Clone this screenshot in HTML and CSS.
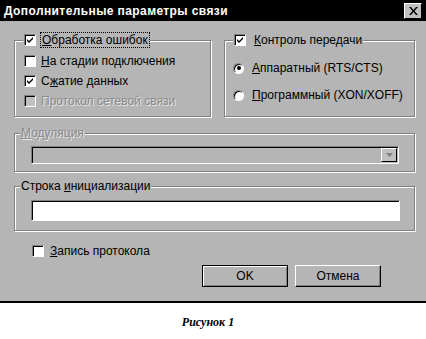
FILE: index.html
```html
<!DOCTYPE html>
<html lang="ru">
<head>
    <meta charset="UTF-8">
    <title>Дополнительные параметры связи</title>
    <link rel="stylesheet" href="styles.css">
</head>
<body>
    <div class="window">
        <div class="titlebar">
            <span class="title">Дополнительные параметры связи</span>
            <span class="close">
                <svg width="9" height="8" viewBox="0 0 9 8"><path d="M0 0h2l2.5 3 2.5-3h2l-3.5 4 3.5 4h-2l-2.5-3-2.5 3h-2l3.5-4z" fill="#000"/></svg>
            </span>
        </div>
        <div class="content">
            <div class="top-row">
                <fieldset class="group group-errors">
                    <legend>
                        <label class="check">
                            <span class="box on"></span>
                            <span class="focus"><u>О</u>бработка ошибок</span>
                        </label>
                    </legend>
                    <div class="rows">
                        <label class="check"><span class="box"></span><span><u>Н</u>а стадии подключения</span></label>
                        <label class="check"><span class="box on"></span><span>С<u>ж</u>атие данных</span></label>
                        <label class="check disabled"><span class="box"></span><span>Протокол сетевой связи</span></label>
                    </div>
                </fieldset>
                <fieldset class="group group-flow">
                    <legend>
                        <label class="check wide">
                            <span class="box on"></span>
                            <span><u>К</u>онтроль передачи</span>
                        </label>
                    </legend>
                    <div class="rows radios">
                        <label class="check wide"><span class="radio on"></span><span><u>А</u>ппаратный (RTS/CTS)</span></label>
                        <label class="check wide"><span class="radio"></span><span><u>П</u>рограммный (XON/XOFF)</span></label>
                    </div>
                </fieldset>
            </div>

            <fieldset class="group group-wide group-modulation">
                <legend class="text-legend disabled"><u>М</u>одуляция</legend>
                <div class="combo">
                    <span class="combo-arrow">
                        <svg width="7" height="4" viewBox="0 0 7 4"><path d="M0 0h7l-3.5 4z" fill="#808080"/></svg>
                    </span>
                </div>
            </fieldset>

            <fieldset class="group group-wide group-init">
                <legend class="text-legend">Строка <u>и</u>нициализации</legend>
                <div class="field"></div>
            </fieldset>

            <label class="check log"><span class="box"></span><span><u>З</u>апись протокола</span></label>

            <div class="buttons">
                <button class="btn default">OK</button>
                <button class="btn">Отмена</button>
            </div>
        </div>
    </div>
    <p class="caption">Рисунок 1</p>
</body>
</html>
```

FILE: styles.css
```css
body {
    margin: 0;
    background: #fff;
    font-family: "Liberation Sans", Arial, sans-serif;
    font-size: 12px;
    color: #000;
}
.window {
    width: 426px;
    height: 303px;
    background: #b5b5b5;
    border-bottom: 2px solid #000;
    box-sizing: border-box;
}
.titlebar {
    height: 21px;
    background: #000;
    display: flex;
    align-items: center;
    justify-content: space-between;
    padding: 0 4px 0 4px;
}
.title {
    color: #fff;
    font-weight: bold;
    font-size: 12px;
    letter-spacing: 0.4px;
}
.close {
    width: 16px;
    height: 14px;
    background: #c0c0c0;
    border: 1px solid;
    border-color: #fff #000 #000 #fff;
    display: flex;
    align-items: center;
    justify-content: center;
}
.content {
    padding: 12px 11px 0 14px;
}
.top-row {
    display: flex;
    gap: 13px;
}
.group {
    margin: 0;
    padding: 0 8px;
    border: 1px solid #808080;
    box-shadow: inset 1px 1px #fff, 1px 1px #fff;
    min-width: 0;
}
.group legend {
    padding: 0 1px;
    background: #b5b5b5;
}
.group-errors {
    width: 197px;
    box-sizing: border-box;
}
.group-flow {
    flex: 1;
}
.rows {
    display: flex;
    flex-direction: column;
    padding: 4px 0 5px 1px;
}
.rows .check {
    height: 20px;
}
.rows.radios {
    padding: 11px 0 10px 0;
    gap: 7px;
}
.check {
    display: flex;
    align-items: center;
    gap: 5px;
    height: 14px;
    white-space: nowrap;
}
.check.wide {
    gap: 8px;
}
.box {
    width: 12px;
    height: 12px;
    box-sizing: border-box;
    background: #fff;
    border: 1px solid;
    border-color: #808080 #fff #fff #808080;
    box-shadow: inset 1px 1px #000;
    flex: none;
}
.box.on {
    background: #fff url("data:image/svg+xml,%3Csvg xmlns='http://www.w3.org/2000/svg' width='10' height='10'%3E%3Cpath d='M2 4l2 2 4-4v2l-4 4-2-2z' fill='%23000'/%3E%3C/svg%3E") center/10px 10px no-repeat;
}
.disabled .box {
    background: #c0c0c0;
}
.radio {
    width: 11px;
    height: 11px;
    border-radius: 50%;
    background: #fff;
    box-sizing: border-box;
    border: 1px solid;
    border-color: #808080 #fff #fff #808080;
    box-shadow: inset 1px 1px #000;
    flex: none;
    display: flex;
    align-items: center;
    justify-content: center;
}
.radio.on::after {
    content: "";
    width: 4px;
    height: 4px;
    border-radius: 50%;
    background: #000;
}
.focus {
    outline: 1px dotted #000;
    padding: 0 1px;
}
.disabled {
    color: #8a8a8a;
    text-shadow: 1px 1px #e8e8e8;
}
.group-wide {
    padding: 0 15px 0 16px;
}
.text-legend {
    line-height: 14px;
    margin-left: -11px;
}
.group-modulation {
    margin-top: 9px;
    padding-top: 6px;
    padding-bottom: 7px;
}
.combo {
    height: 18px;
    box-sizing: border-box;
    background: #b5b5b5;
    border: 1px solid;
    border-color: #808080 #fff #fff #808080;
    box-shadow: inset 1px 1px #000;
    display: flex;
    justify-content: flex-end;
    padding: 1px 1px 1px 2px;
}
.combo-arrow {
    width: 16px;
    height: 14px;
    box-sizing: border-box;
    background: #c0c0c0;
    border: 1px solid;
    border-color: #fff #000 #000 #fff;
    display: flex;
    align-items: center;
    justify-content: center;
}
.group-init {
    margin-top: 7px;
    padding-top: 7px;
    padding-bottom: 9px;
    padding-right: 14px;
}
.field {
    height: 21px;
    box-sizing: border-box;
    background: #fff;
    border: 1px solid;
    border-color: #808080 #fff #fff #808080;
    box-shadow: inset 1px 1px #000;
}
.log {
    margin: 13px 0 0 18px;
    gap: 6px;
}
.buttons {
    display: flex;
    justify-content: flex-end;
    gap: 7px;
    margin: 7px 34px 0 0;
}
.btn {
    width: 86px;
    height: 22px;
    font-family: "Liberation Sans", Arial, sans-serif;
    font-size: 12px;
    color: #000;
    background: #b5b5b5;
    border: 1px solid;
    border-color: #fff #000 #000 #fff;
    box-shadow: inset -1px -1px #808080;
    padding: 0;
}
.btn.default {
    border-color: #000;
    box-shadow: inset 1px 1px #fff, inset -1px -1px #808080;
}
.caption {
    margin: 12px 0 0;
    padding-right: 10px;
    text-align: center;
    font-family: "Liberation Serif", "Times New Roman", serif;
    font-weight: bold;
    font-style: italic;
    font-size: 12px;
}
```
